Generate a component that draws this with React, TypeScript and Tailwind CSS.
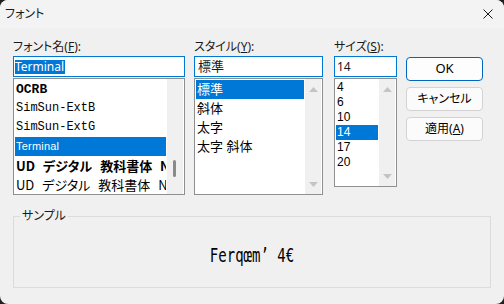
import React from 'react';

const jp = "font-['Noto_Sans','Noto_Sans_CJK_JP',sans-serif] [font-feature-settings:'palt']";

function Arrow({ down }: { down?: boolean }) {
    return (
        <svg width="9" height="5" viewBox="0 0 9 5">
            <path d={down ? 'M0 0 L9 0 L4.5 5 Z' : 'M0 5 L9 5 L4.5 0 Z'} fill="#c4c4c4" />
        </svg>
    );
}

export default function App() {
    const fonts = [
        { name: 'OCRB', cls: "font-['Liberation_Mono',monospace] font-bold text-[13px]" },
        { name: 'SimSun-ExtB', cls: "font-['Liberation_Mono',monospace] text-[12px]" },
        { name: 'SimSun-ExtG', cls: "font-['Liberation_Mono',monospace] text-[12px]" },
        { name: 'Terminal', cls: "font-['Liberation_Sans',sans-serif] text-[11px] tracking-[0.2px]", selected: true },
        { name: 'UD デジタル 教科書体 N-B', cls: "font-['Noto_Sans_CJK_JP',sans-serif] font-bold text-[13px] [word-spacing:5px]" },
        { name: 'UD デジタル 教科書体 N-R', cls: "font-['Noto_Sans_CJK_JP',sans-serif] text-[13px] [word-spacing:5px]" },
    ];
    const styles = ['標準', '斜体', '太字', '太字 斜体'];
    const sizes = ['4', '6', '10', '14', '17', '20'];

    return (
        <div className={`w-[504px] h-[304px] bg-[#1f1f1f] text-[#1a1a1a] ${jp}`}>
            <div className="w-full h-full rounded-[8px] overflow-hidden bg-[#f0f0f0] flex flex-col">
                {/* タイトルバー */}
                <div className="h-[28px] bg-[#f3f3f3] flex items-center justify-between pl-[5px] pr-[11px]">
                    <span className="text-[12px]">フォント</span>
                    <svg width="10" height="10" viewBox="0 0 10 10">
                        <path d="M0.5 0.5 L9.5 9.5 M9.5 0.5 L0.5 9.5" stroke="#1a1a1a" strokeWidth="1" />
                    </svg>
                </div>

                <div className="flex pl-[13px] pt-[10px]">
                    {/* フォント名 */}
                    <div className="w-[172px] flex flex-col">
                        <div className="h-[18px] leading-[18px] text-[12px]">
                            フォント名(<span className="underline">F</span>):
                        </div>
                        <div className="h-[21px] border border-[#0078d4] bg-white pl-[1px] flex items-center">
                            <span className="bg-[#0078d7] text-white text-[12px] leading-[14px] pr-[1px]">Terminal</span>
                        </div>
                        <div className="mt-[1px] h-[117px] border border-[#8f8f8f] bg-white flex">
                            <div className="flex-1 min-w-0 px-[1px] pt-[1px] overflow-hidden">
                                {fonts.map((f) => (
                                    <div
                                        key={f.name}
                                        className={`h-[19px] leading-[19px] pl-[1px] whitespace-nowrap overflow-hidden ${f.selected ? 'bg-[#0078d7] text-white' : 'text-black'} ${f.cls}`}
                                    >
                                        {f.name}
                                    </div>
                                ))}
                            </div>
                            <div className="w-[16px] mr-[1px] bg-[#f0f0f0] flex flex-col items-start pl-[6px] pt-[81px]">
                                <div className="w-[3px] h-[17px] rounded-full bg-[#8a8a8a]" />
                            </div>
                        </div>
                    </div>

                    {/* スタイル */}
                    <div className="ml-[9px] w-[129px] flex flex-col">
                        <div className="h-[18px] leading-[18px] text-[12px]">
                            スタイル(<span className="underline">Y</span>):
                        </div>
                        <div className="h-[21px] border border-[#0078d4] bg-white pl-[3px] flex items-center text-[13px] leading-[19px]">
                            標準
                        </div>
                        <div className="mt-[1px] h-[117px] border border-[#8f8f8f] bg-white flex">
                            <div className="flex-1 min-w-0 px-[1px] pt-[1px]">
                                {styles.map((s, i) => (
                                    <div
                                        key={s}
                                        className={`h-[19px] leading-[19px] pl-[1px] text-[13px] whitespace-nowrap ${i === 0 ? 'bg-[#0078d7] text-white' : 'text-black'}`}
                                    >
                                        {s}
                                    </div>
                                ))}
                            </div>
                            <div className="w-[16px] mr-[1px] bg-[#f0f0f0] flex flex-col items-center justify-between pt-[8px] pb-[7px]">
                                <Arrow />
                                <Arrow down />
                            </div>
                        </div>
                    </div>

                    {/* サイズ */}
                    <div className="ml-[11px] w-[63px] flex flex-col">
                        <div className="h-[18px] leading-[18px] text-[12px] whitespace-nowrap">
                            サイズ(<span className="underline">S</span>):
                        </div>
                        <div className="h-[21px] border border-[#0078d4] bg-white pl-[2px] flex items-center text-[12px] leading-[19px]">
                            14
                        </div>
                        <div className="mt-[1px] h-[109px] border border-[#8f8f8f] bg-white flex">
                            <div className="flex-1 min-w-0 px-[1px] pt-[1px]">
                                {sizes.map((s) => (
                                    <div
                                        key={s}
                                        className={`h-[15px] leading-[15px] pl-[1px] text-[12px] font-['Liberation_Sans',sans-serif] ${s === '14' ? 'bg-[#0078d7] text-white' : 'text-black'}`}
                                    >
                                        {s}
                                    </div>
                                ))}
                            </div>
                            <div className="w-[16px] mr-[1px] bg-[#f0f0f0] flex flex-col items-center justify-between pt-[8px] pb-[7px]">
                                <Arrow />
                                <Arrow down />
                            </div>
                        </div>
                    </div>

                    {/* ボタン */}
                    <div className="ml-[9px] w-[77px] pt-[19px] flex flex-col gap-[6px]">
                        <button className="h-[24px] rounded-[4px] border border-[#0067c0] bg-[#fdfdfd] text-[13px] text-black">
                            OK
                        </button>
                        <button className="h-[24px] rounded-[4px] border border-[#d3d3d3] bg-[#fbfbfb] text-[12px] text-black">
                            キャンセル
                        </button>
                        <button className="h-[24px] rounded-[4px] border border-[#d3d3d3] bg-[#fbfbfb] text-[12px] text-black">
                            適用(<span className="underline">A</span>)
                        </button>
                    </div>
                </div>

                {/* サンプル */}
                <fieldset className="ml-[13px] mt-[14px] w-[478px] h-[79px] border border-[#dcdcdc] flex items-center justify-center">
                    <legend className="ml-[6px] px-[2px] text-[12px] leading-[14px]">サンプル</legend>
                    <div className="h-[64px] flex items-center justify-center">
                        <span className="inline-block scale-y-[1.35] text-[14px] text-black font-['DejaVu_Sans_Mono',monospace] whitespace-pre">
                            Ferqœm’ 4€
                        </span>
                    </div>
                </fieldset>
            </div>
        </div>
    );
}
